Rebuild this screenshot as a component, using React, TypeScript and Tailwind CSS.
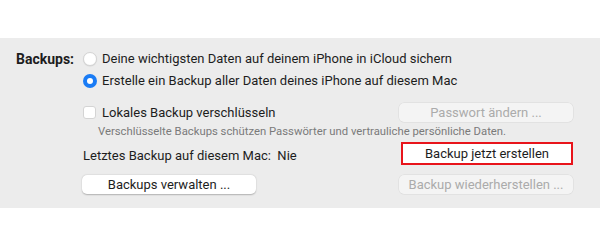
const font = { fontFamily: "Roboto, 'Liberation Sans', sans-serif" };

function Radio({ checked }: { checked?: boolean }) {
  return checked ? (
    <span className="flex h-[14px] w-[14px] shrink-0 items-center justify-center rounded-full bg-[#1a7cf5]">
      <span className="h-[6px] w-[6px] rounded-full bg-white" />
    </span>
  ) : (
    <span className="h-[14px] w-[14px] shrink-0 rounded-full border border-[#d4d4d4] bg-white shadow-[0_0.5px_1px_rgba(0,0,0,0.1)]" />
  );
}

function Btn({ label, disabled, highlight }: { label: string; disabled?: boolean; highlight?: boolean }) {
  if (highlight) {
    return (
      <div className="flex h-[23px] w-[172px] shrink-0 items-center justify-center border-2 border-[#e8141b] bg-white text-[13px] text-[#1d1d1d]">
        {label}
      </div>
    );
  }
  return (
    <div
      className={`flex h-[19px] w-[174px] shrink-0 items-center justify-center rounded-[5px] text-[13px] ${
        disabled
          ? "bg-[#f4f4f4] text-[#ababab] shadow-[0_0_0_0.5px_rgba(0,0,0,0.08)]"
          : "bg-white text-[#1d1d1d] shadow-[0_0.5px_1.5px_rgba(0,0,0,0.25)]"
      }`}
    >
      {label}
    </div>
  );
}

export default function App() {
  return (
    <div className="h-[247px] w-[600px] bg-white" style={font}>
      <div className="h-[38px]" />
      <div className="flex h-[170px] flex-col bg-[#ececec] text-[13px] text-[#1d1d1d]">
        <div className="mt-[14px] flex h-[14px] items-center">
          <span className="ml-[16px] w-[67px] shrink-0 text-[14px] font-bold">Backups:</span>
          <Radio />
          <span className="ml-[5px]">Deine wichtigsten Daten auf deinem iPhone in iCloud sichern</span>
        </div>
        <div className="mt-[8px] flex h-[14px] items-center">
          <span className="w-[83px] shrink-0" />
          <Radio checked />
          <span className="ml-[5px]">Erstelle ein Backup aller Daten deines iPhone auf diesem Mac</span>
        </div>
        <div className="mt-[15px] flex h-[19px] items-center">
          <span className="ml-[83px] h-[13px] w-[13px] shrink-0 rounded-[3px] border border-[#d4d4d4] bg-white" />
          <span className="ml-[6px]">Lokales Backup verschlüsseln</span>
          <span className="ml-auto mr-[27px]">
            <Btn label="Passwort ändern ..." disabled />
          </span>
        </div>
        <div className="mt-[3px] ml-[98px] h-[14px] text-[11.3px] leading-[14px] text-[#7a7a7a]">
          Verschlüsselte Backups schützen Passwörter und vertrauliche persönliche Daten.
        </div>
        <div className="mt-[3px] flex h-[23px] items-center">
          <span className="ml-[83px] mt-[4px]">Letztes Backup auf diesem Mac:&nbsp; Nie</span>
          <span className="ml-auto mr-[27px]">
            <Btn label="Backup jetzt erstellen" highlight />
          </span>
        </div>
        <div className="mt-[10px] flex h-[19px] items-center">
          <span className="ml-[82px]">
            <Btn label="Backups verwalten ..." />
          </span>
          <span className="ml-auto mr-[27px]">
            <Btn label="Backup wiederherstellen ..." disabled />
          </span>
        </div>
      </div>
    </div>
  );
}
